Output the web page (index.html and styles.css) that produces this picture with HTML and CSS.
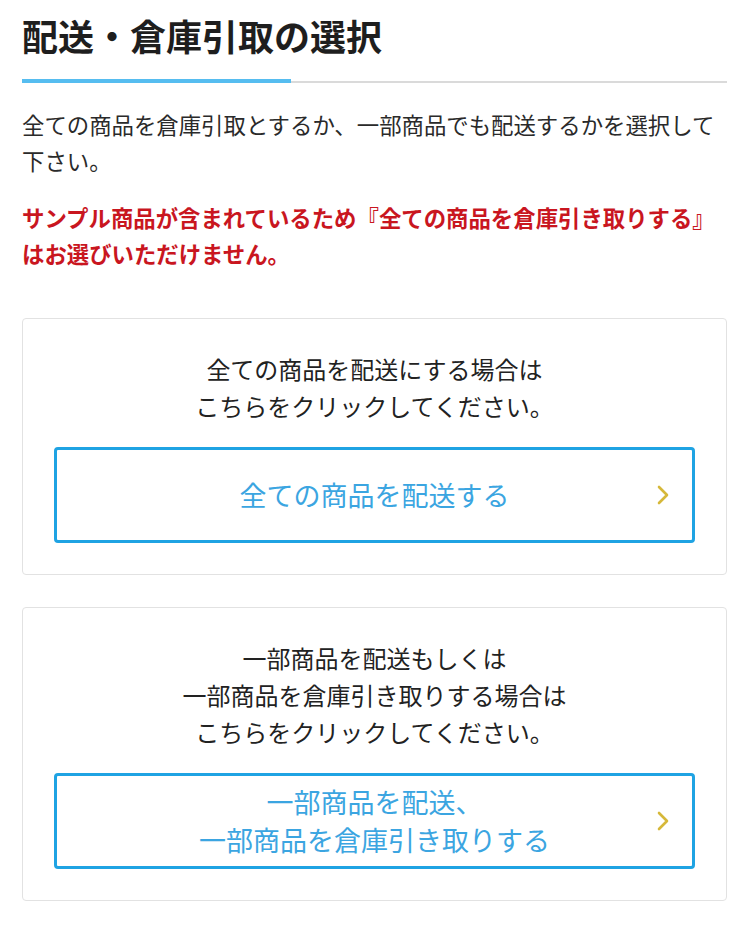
FILE: index.html
```html
<!DOCTYPE html>
<html lang="ja">
<head>
<meta charset="utf-8">
<title>配送・倉庫引取の選択</title>
<link rel="stylesheet" href="styles.css">
</head>
<body>
<main class="page">
  <h1 class="title">配送・倉庫引取の選択</h1>
  <div class="rule"><span class="rule-accent"></span><span class="rule-rest"></span></div>
  <p class="lead">全ての商品を倉庫引取とするか、一部商品でも配送するかを選択して下さい。</p>
  <p class="notice">サンプル商品が含まれているため『全ての商品を倉庫引き取りする』はお選びいただけません。</p>

  <section class="card">
    <p class="card-text">全ての商品を配送にする場合は<br>こちらをクリックしてください。</p>
    <a class="choice" href="#">
      <span class="choice-label">全ての商品を配送する</span>
      <svg class="chevron" viewBox="0 0 12 20" width="12" height="20" aria-hidden="true"><polyline points="2,2 10,10 2,18" fill="none" stroke="currentColor" stroke-width="2.6" stroke-linecap="round" stroke-linejoin="round"/></svg>
    </a>
  </section>

  <section class="card">
    <p class="card-text">一部商品を配送もしくは<br>一部商品を倉庫引き取りする場合は<br>こちらをクリックしてください。</p>
    <a class="choice" href="#">
      <span class="choice-label">一部商品を配送、<br>一部商品を倉庫引き取りする</span>
      <svg class="chevron" viewBox="0 0 12 20" width="12" height="20" aria-hidden="true"><polyline points="2,2 10,10 2,18" fill="none" stroke="currentColor" stroke-width="2.6" stroke-linecap="round" stroke-linejoin="round"/></svg>
    </a>
  </section>
</main>
</body>
</html>
```

FILE: styles.css
```css
* { box-sizing: border-box; }

html, body {
  margin: 0;
  padding: 0;
  background: #ffffff;
}

body {
  font-family: "Noto Sans CJK JP", "Noto Sans", sans-serif;
  color: #222222;
}

.page {
  padding: 10px 23px 40px 22px;
}

.title {
  margin: 0;
  font-size: 36px;
  line-height: 50px;
  font-weight: 700;
  color: #1e1e1e;
}

.rule {
  display: flex;
  align-items: flex-end;
  margin-top: 19px;
  height: 4px;
}

.rule-accent {
  width: 269px;
  height: 4px;
  background: #56bdf0;
}

.rule-rest {
  flex: 1;
  height: 2px;
  background: #dadada;
}

.lead {
  margin: 24px 0 0;
  font-size: 22.4px;
  line-height: 1.6;
  color: #2a2a2a;
}

.notice {
  margin: 21px 0 0;
  font-size: 22.4px;
  line-height: 1.6;
  font-weight: 700;
  color: #c9161f;
}

.card {
  margin-top: 47px;
  border: 1px solid #e2e2e2;
  border-radius: 4px;
  padding: 31px 31px 31px;
}

.card + .card {
  margin-top: 32px;
}

.card-text {
  margin: 0;
  text-align: center;
  font-size: 24px;
  line-height: 37px;
  color: #222222;
}

.choice {
  position: relative;
  display: flex;
  align-items: center;
  justify-content: center;
  height: 96px;
  margin-top: 23px;
  border: 3px solid #1fa3e3;
  border-radius: 4px;
  text-decoration: none;
  background: #ffffff;
}

.choice-label {
  text-align: center;
  font-size: 27px;
  line-height: 38px;
  color: #3ba5e1;
}

.chevron {
  position: absolute;
  right: 23px;
  top: 50%;
  margin-top: -10px;
  color: #d6b83a;
}
```
